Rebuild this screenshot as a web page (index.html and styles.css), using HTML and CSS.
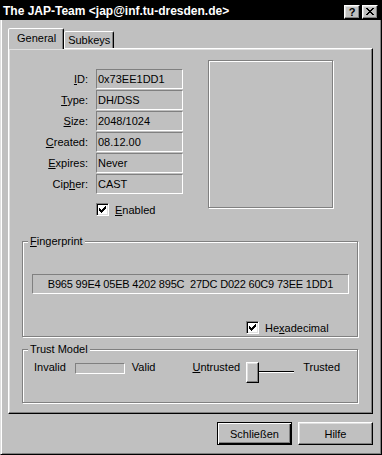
FILE: index.html
```html
<!DOCTYPE html>
<html lang="de">
<head>
    <meta charset="UTF-8">
    <meta name="viewport" content="width=device-width, initial-scale=1.0">
    <title>Key Properties</title>
    <link rel="stylesheet" href="styles.css">
</head>
<body>
    <div class="window">
        <div class="titlebar">
            <span class="title">The JAP-Team &lt;jap@inf.tu-dresden.de&gt;</span>
            <span class="title-btn help">?</span>
            <span class="title-btn close">
                <svg width="8" height="7" viewBox="0 0 8 7" shape-rendering="crispEdges">
                    <path d="M0 0h2v1h-2z M6 0h2v1h-2z M1 1h2v1h-2z M5 1h2v1h-2z M2 2h4v1h-4z M3 3h2v1h-2z M2 4h4v1h-4z M1 5h2v1h-2z M5 5h2v1h-2z M0 6h2v1h-2z M6 6h2v1h-2z" fill="#000"/>
                </svg>
            </span>
        </div>

        <div class="window-body">
            <div class="tabs">
                <div class="tab active">General</div>
                <div class="tab">Subkeys</div>
            </div>

            <div class="panel">
                <div class="key-top">
                    <div class="key-info">
                        <label><u>I</u>D:</label>
                        <div class="field">0x73EE1DD1</div>
                        <label><u>T</u>ype:</label>
                        <div class="field">DH/DSS</div>
                        <label><u>S</u>ize:</label>
                        <div class="field">2048/1024</div>
                        <label><u>C</u>reated:</label>
                        <div class="field">08.12.00</div>
                        <label><u>E</u>xpires:</label>
                        <div class="field">Never</div>
                        <label>Cip<u>h</u>er:</label>
                        <div class="field">CAST</div>
                        <div class="check-row enabled-row">
                            <span class="checkbox">
                                <svg width="7" height="7" viewBox="0 0 7 7" shape-rendering="crispEdges">
                                    <path d="M0 2h1v3h-1z M1 3h1v3h-1z M2 4h1v3h-1z M3 3h1v3h-1z M4 2h1v3h-1z M5 1h1v3h-1z M6 0h1v3h-1z" fill="#000"/>
                                </svg>
                            </span>
                            <span><u>E</u>nabled</span>
                        </div>
                    </div>
                    <div class="photo"></div>
                </div>

                <div class="group fingerprint">
                    <span class="group-title"><u>F</u>ingerprint</span>
                    <div class="field fp-field">B965 99E4 05EB 4202 895C&nbsp; 27DC D022 60C9 73EE 1DD1</div>
                    <div class="check-row hex-row">
                        <span class="checkbox">
                            <svg width="7" height="7" viewBox="0 0 7 7" shape-rendering="crispEdges">
                                <path d="M0 2h1v3h-1z M1 3h1v3h-1z M2 4h1v3h-1z M3 3h1v3h-1z M4 2h1v3h-1z M5 1h1v3h-1z M6 0h1v3h-1z" fill="#000"/>
                            </svg>
                        </span>
                        <span>He<u>x</u>adecimal</span>
                    </div>
                </div>

                <div class="group trust">
                    <span class="group-title">Trust Model</span>
                    <div class="trust-row">
                        <span class="trust-invalid">Invalid</span>
                        <span class="validity-bar"></span>
                        <span class="trust-valid">Valid</span>
                        <span class="trust-untrusted"><u>U</u>ntrusted</span>
                        <div class="slider">
                            <span class="thumb"></span>
                            <span class="track"></span>
                        </div>
                        <span class="trust-trusted">Trusted</span>
                    </div>
                </div>
            </div>

            <div class="buttons">
                <button class="default">Schließen</button>
                <button>Hilfe</button>
            </div>
        </div>
    </div>
</body>
</html>
```

FILE: styles.css
```css
* {
    margin: 0;
    padding: 0;
    box-sizing: border-box;
}

body {
    font-family: "Liberation Sans", Arial, sans-serif;
    font-size: 11px;
    color: #000;
    background: #c0c0c0;
    width: 382px;
    height: 455px;
    overflow: hidden;
}

u {
    text-decoration-thickness: 1px;
    text-underline-offset: 1px;
}

.window {
    display: flex;
    flex-direction: column;
    height: 455px;
}

/* title bar */
.titlebar {
    height: 20px;
    background: #000;
    display: flex;
    align-items: center;
    padding: 0 4px 0 3px;
}

.title {
    flex: 1;
    color: #fff;
    font-weight: bold;
    font-size: 12px;
    padding-top: 2px;
}

.title-btn {
    width: 16px;
    height: 14px;
    margin-top: 3px;
    background: #c0c0c0;
    border: 1px solid;
    border-color: #fff #000 #000 #fff;
    box-shadow: inset -1px -1px #808080, inset 1px 1px #dfdfdf;
    display: flex;
    align-items: center;
    justify-content: center;
    font-weight: bold;
    font-size: 11px;
    line-height: 12px;
}

.title-btn.close {
    margin-left: 2px;
}

.window-body {
    flex: 1;
    display: flex;
    flex-direction: column;
    border: 1px solid;
    border-top: 0;
    border-color: transparent #000 #000 #dfdfdf;
    box-shadow: inset 1px 0 #fff, inset -1px -1px #808080;
    padding: 0 0 0 7px;
}

/* tabs */
.tabs {
    display: flex;
    align-items: flex-end;
    margin-top: 8px;
    height: 20px;
}

.tab {
    height: 17px;
    padding: 2px 3px 0 3px;
    border: 1px solid;
    border-bottom: 0;
    border-color: #fff #000 transparent #fff;
    border-radius: 2px 2px 0 0;
    box-shadow: inset -1px 0 #808080;
    background: #c0c0c0;
}

.tab.active {
    height: 21px;
    margin-bottom: -1px;
    padding: 3px 7px 0 8px;
    position: relative;
    z-index: 1;
}

/* tab page */
.panel {
    width: 365px;
    height: 366px;
    border: 1px solid;
    border-color: #fff #000 #000 #fff;
    box-shadow: inset -1px -1px #808080, inset 1px 1px #dfdfdf;
}

.key-top {
    display: flex;
    align-items: flex-start;
}

.key-info {
    display: grid;
    grid-template-columns: 80px 87px;
    column-gap: 7px;
    row-gap: 1px;
    margin-top: 20px;
    align-items: center;
}

.key-info label {
    text-align: right;
    padding-right: 1px;
}

.field {
    height: 20px;
    border: 1px solid;
    border-color: #808080 #fff #fff #808080;
    display: flex;
    align-items: center;
    padding: 0 1px;
    white-space: nowrap;
}

.photo {
    width: 125px;
    height: 148px;
    margin: 11px 0 0 25px;
    border: 1px solid #808080;
    box-shadow: 1px 1px 0 #fff, inset 1px 1px 0 #fff;
}

.check-row {
    display: flex;
    align-items: center;
    gap: 6px;
}

.enabled-row {
    grid-column: 2;
    margin-top: 8px;
}

.checkbox {
    width: 13px;
    height: 13px;
    background: #fff;
    border: 1px solid;
    border-color: #808080 #fff #fff #808080;
    box-shadow: inset 1px 1px #000, inset -1px -1px #dfdfdf;
    display: flex;
    align-items: center;
    justify-content: center;
}

/* group boxes */
.group {
    position: relative;
    margin-left: 13px;
    width: 336px;
    border: 1px solid #808080;
    box-shadow: 1px 1px 0 #fff, inset 1px 1px 0 #fff;
}

.group-title {
    position: absolute;
    top: -7px;
    left: 5px;
    padding: 0 2px;
    line-height: 13px;
    background: #c0c0c0;
}

.fingerprint {
    margin-top: 25px;
    height: 96px;
    padding: 32px 8px 0 9px;
}

.fp-field {
    justify-content: center;
    letter-spacing: -0.2px;
}

.hex-row {
    margin: 27px 0 0 214px;
}

.trust {
    margin-top: 12px;
    height: 54px;
    padding-left: 11px;
}

.trust-row {
    display: flex;
    align-items: flex-start;
}

.trust-row span {
    line-height: 13px;
}

.trust-invalid,
.trust-valid,
.trust-untrusted,
.trust-trusted {
    margin-top: 11px;
}

.validity-bar {
    width: 50px;
    height: 11px;
    margin: 13px 7px 0 9px;
    border: 1px solid;
    border-color: #808080 #fff #fff #808080;
}

.trust-untrusted {
    margin-left: 37px;
}

.slider {
    display: flex;
    width: 48px;
    margin: 12px 9px 0 6px;
}

.thumb {
    width: 13px;
    height: 21px;
    border: 1px solid;
    border-color: #fff #000 #000 #fff;
    box-shadow: inset -1px -1px #808080, inset 1px 1px #dfdfdf;
}

.track {
    flex: 1;
    height: 2px;
    margin-top: 9px;
    border-top: 1px solid #000;
    border-bottom: 1px solid #fff;
}

/* dialog buttons */
.buttons {
    display: flex;
    justify-content: flex-end;
    gap: 6px;
    margin-top: 8px;
    padding-right: 8px;
}

button {
    width: 75px;
    height: 23px;
    font-family: inherit;
    font-size: 11px;
    color: #000;
    background: #c0c0c0;
    border: 1px solid;
    border-color: #fff #000 #000 #fff;
    box-shadow: inset -1px -1px #808080, inset 1px 1px #dfdfdf;
}

button.default {
    border-color: #000;
    box-shadow: inset 1px 1px #fff, inset -1px -1px #000, inset -2px -2px #808080;
}
```
